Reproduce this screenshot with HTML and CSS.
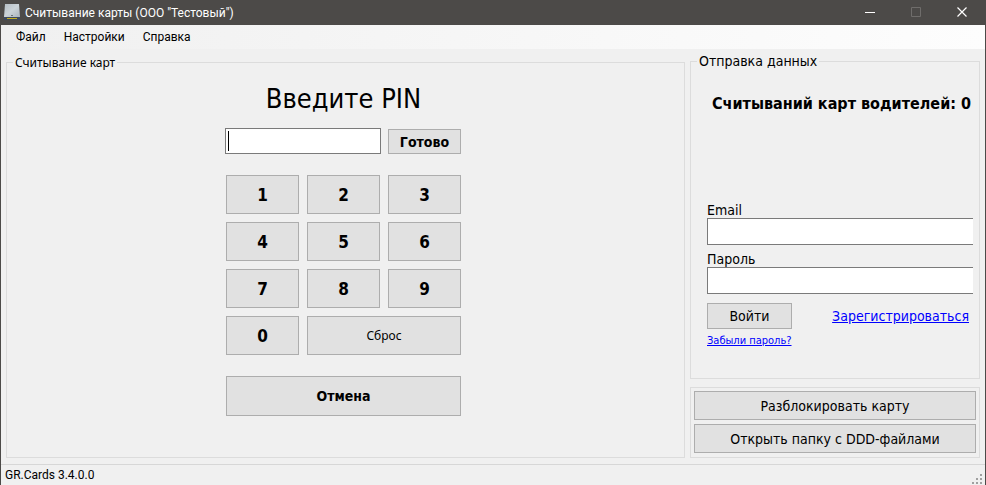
FILE: index.html
```html
<!DOCTYPE html>
<html lang="ru">
<head>
<meta charset="utf-8">
<title>Считывание карты</title>
<link rel="stylesheet" href="styles.css">
</head>
<body>
<div class="window">
  <header class="titlebar">
    <svg class="app-icon" width="16" height="16" viewBox="0 0 16 16" aria-hidden="true">
      <defs><linearGradient id="metal" x1="0" y1="0" x2="1" y2="1"><stop offset="0" stop-color="#b4bec5"/><stop offset=".5" stop-color="#cbd3d8"/><stop offset="1" stop-color="#a9b4bc"/></linearGradient></defs>
      <path d="M1 0h14l1 13H0z" fill="url(#metal)"/>
      <path d="M0 13h16v3H0z" fill="#3d4a5c"/>
      <path d="M3 14h10v1H3z" fill="#c5ad20"/>
      <path d="M7 11h2v1H7z" fill="#69747c"/>
    </svg>
    <span class="title">Считывание карты (ООО "Тестовый")</span>
    <div class="controls">
      <button class="control" aria-label="Свернуть"><svg width="11" height="11" viewBox="0 0 11 11"><path d="M0 5.500h10" stroke="#fff"/></svg></button>
      <button class="control" aria-label="Развернуть" disabled><svg width="11" height="11" viewBox="0 0 11 11"><path d="M.5 .5h9v9h-9z" fill="none" stroke="#6f6d6b"/></svg></button>
      <button class="control" aria-label="Закрыть"><svg width="11" height="11" viewBox="0 0 11 11"><path d="M.5 .5l9 9M9.500 .5l-9 9" stroke="#fff" stroke-width="1.2"/></svg></button>
    </div>
  </header>
  <nav class="menu">
    <button class="menu-item">Файл</button>
    <button class="menu-item">Настройки</button>
    <button class="menu-item">Справка</button>
  </nav>
  <main class="main">
    <fieldset class="group reader">
      <legend class="legend-reader">Считывание карт</legend>
      <h1 class="heading"><label for="pin">Введите PIN</label></h1>
      <div class="pad entry">
        <input class="field pin" id="pin" type="text">
        <button class="button done">Готово</button>
      </div>
      <div class="pad keys">
        <button class="button key">1</button>
        <button class="button key">2</button>
        <button class="button key">3</button>
        <button class="button key">4</button>
        <button class="button key">5</button>
        <button class="button key">6</button>
        <button class="button key">7</button>
        <button class="button key">8</button>
        <button class="button key">9</button>
        <button class="button key">0</button>
        <button class="button reset">Сброс</button>
        <button class="button cancel">Отмена</button>
      </div>
    </fieldset>
    <div class="side">
      <fieldset class="group upload">
        <legend class="legend-upload">Отправка данных</legend>
        <p class="count">Считываний карт водителей: 0</p>
        <form class="login">
          <label class="label" for="email">Email</label>
          <input class="field" id="email" type="text">
          <label class="label" for="password">Пароль</label>
          <input class="field" id="password" type="password">
          <div class="actions">
            <button class="button enter" type="button">Войти</button>
            <a class="register" href="#">Зарегистрироваться</a>
          </div>
          <a class="forgot" href="#">Забыли пароль?</a>
        </form>
      </fieldset>
      <div class="group tools">
        <button class="button tool">Разблокировать карту</button>
        <button class="button tool">Открыть папку с DDD-файлами</button>
      </div>
    </div>
  </main>
  <footer class="status">
    <span>GR.Cards 3.4.0.0</span>
    <svg class="grip" width="11" height="11" viewBox="0 0 11 11" fill="#a0a0a0" aria-hidden="true"><path d="M8 0h2v2H8zM4 4h2v2H4zM8 4h2v2H8zM0 8h2v2H0zM4 8h2v2H4zM8 8h2v2H8z"/></svg>
  </footer>
</div>
</body>
</html>
```
FILE: styles.css
```css
* { box-sizing: border-box; }

body {
  margin: 0;
  background: #f0f0f0;
  color: #000;
  font: 14px "DejaVu Sans Condensed", "DejaVu Sans", sans-serif;
}

button, input { font: inherit; color: inherit; border-radius: 0; margin: 0; }

.window {
  display: flex;
  flex-direction: column;
  min-height: 100vh;
  border: solid #4c4a48;
  border-width: 0 1px;
}

.titlebar {
  display: flex;
  align-items: center;
  height: 25px;
  padding-left: 3px;
  background: #4c4a48;
  color: #fff;
  font: 12px Roboto, sans-serif;
}

.app-icon { margin-bottom: 1px; }
.title { margin-left: 5px; }
.controls { display: flex; margin-left: auto; }

.control {
  display: flex;
  align-items: center;
  justify-content: center;
  width: 46px;
  height: 25px;
  padding: 0;
  border: 0;
  background: none;
}

.menu {
  display: flex;
  height: 24px;
  padding-left: 6px;
  background: linear-gradient(90deg, #f0f0f0, #fdfdfd);
  font: 12px Roboto, sans-serif;
}

.menu-item { padding: 0 9px; border: 0; background: none; }

.main {
  display: flex;
  flex: 1;
  gap: 5px;
  padding: 6px 5px;
}

.group { min-width: 0; margin: 0; border: 1px solid #dcdcdc; }
legend { padding: 0 2px; }

.reader { flex: 1; padding: 0 10px 0 6px; }
.legend-reader { font: 12px/15px "Noto Sans", sans-serif; }
.legend-upload { line-height: 13px; }

.heading {
  margin: 13px 0;
  font-size: 27px;
  font-weight: normal;
  line-height: 32px;
  text-align: center;
}

.pad {
  display: grid;
  grid-template-columns: repeat(3, 73px);
  gap: 8px;
  justify-content: center;
}

.keys { grid-auto-rows: 39px; margin-top: 21px; }

.field {
  display: block;
  border: 1px solid #7a7a7a;
  background: #fff;
  padding: 0 4px;
  outline: 0;
}

.pin {
  grid-column: span 2;
  height: 26px;
  margin: 0 -1px;
  background: linear-gradient(#000, #000) 2px 2px / 1px 20px no-repeat #fff;
}

.button {
  padding: 0;
  border: 1px solid #adadad;
  background: #e1e1e1;
}

.done { height: 25px; margin-top: 1px; font-weight: bold; }
.key { font-size: 17px; font-weight: bold; }
.reset { grid-column: span 2; font: 12px "Noto Sans", sans-serif; }
.cancel { grid-column: 1 / -1; height: 40px; margin-top: 13px; font-weight: bold; }

.side {
  display: flex;
  flex-direction: column;
  gap: 8px;
  width: 290px;
}

.upload { flex: 1; padding: 0 6px; }

.count {
  margin: 26px 0 88px;
  padding-right: 2px;
  font-size: 16px;
  font-weight: bold;
  line-height: 20px;
  text-align: right;
  white-space: nowrap;
}

.login { padding-left: 10px; }
.label { display: block; line-height: 16px; }

.login .field {
  width: 100%;
  height: 27px;
  margin-bottom: 6px;
  border-right: 0;
}

.actions {
  display: flex;
  justify-content: space-between;
  align-items: center;
  margin-top: 9px;
  padding-right: 4px;
}

.enter { width: 85px; height: 26px; }
a { color: #00f; }
.forgot { display: block; margin-top: 5px; font-size: 11px; line-height: 14px; }

.tools {
  display: grid;
  gap: 4px;
  padding: 3px;
  padding-bottom: 4px;
}

.tool { height: 29px; }

.status {
  display: flex;
  align-items: center;
  justify-content: space-between;
  height: 21px;
  padding: 0 2px 0 4px;
  border-top: 1px solid #d7d7d7;
  font: 12px Roboto, sans-serif;
}

.grip { align-self: flex-end; }
```
